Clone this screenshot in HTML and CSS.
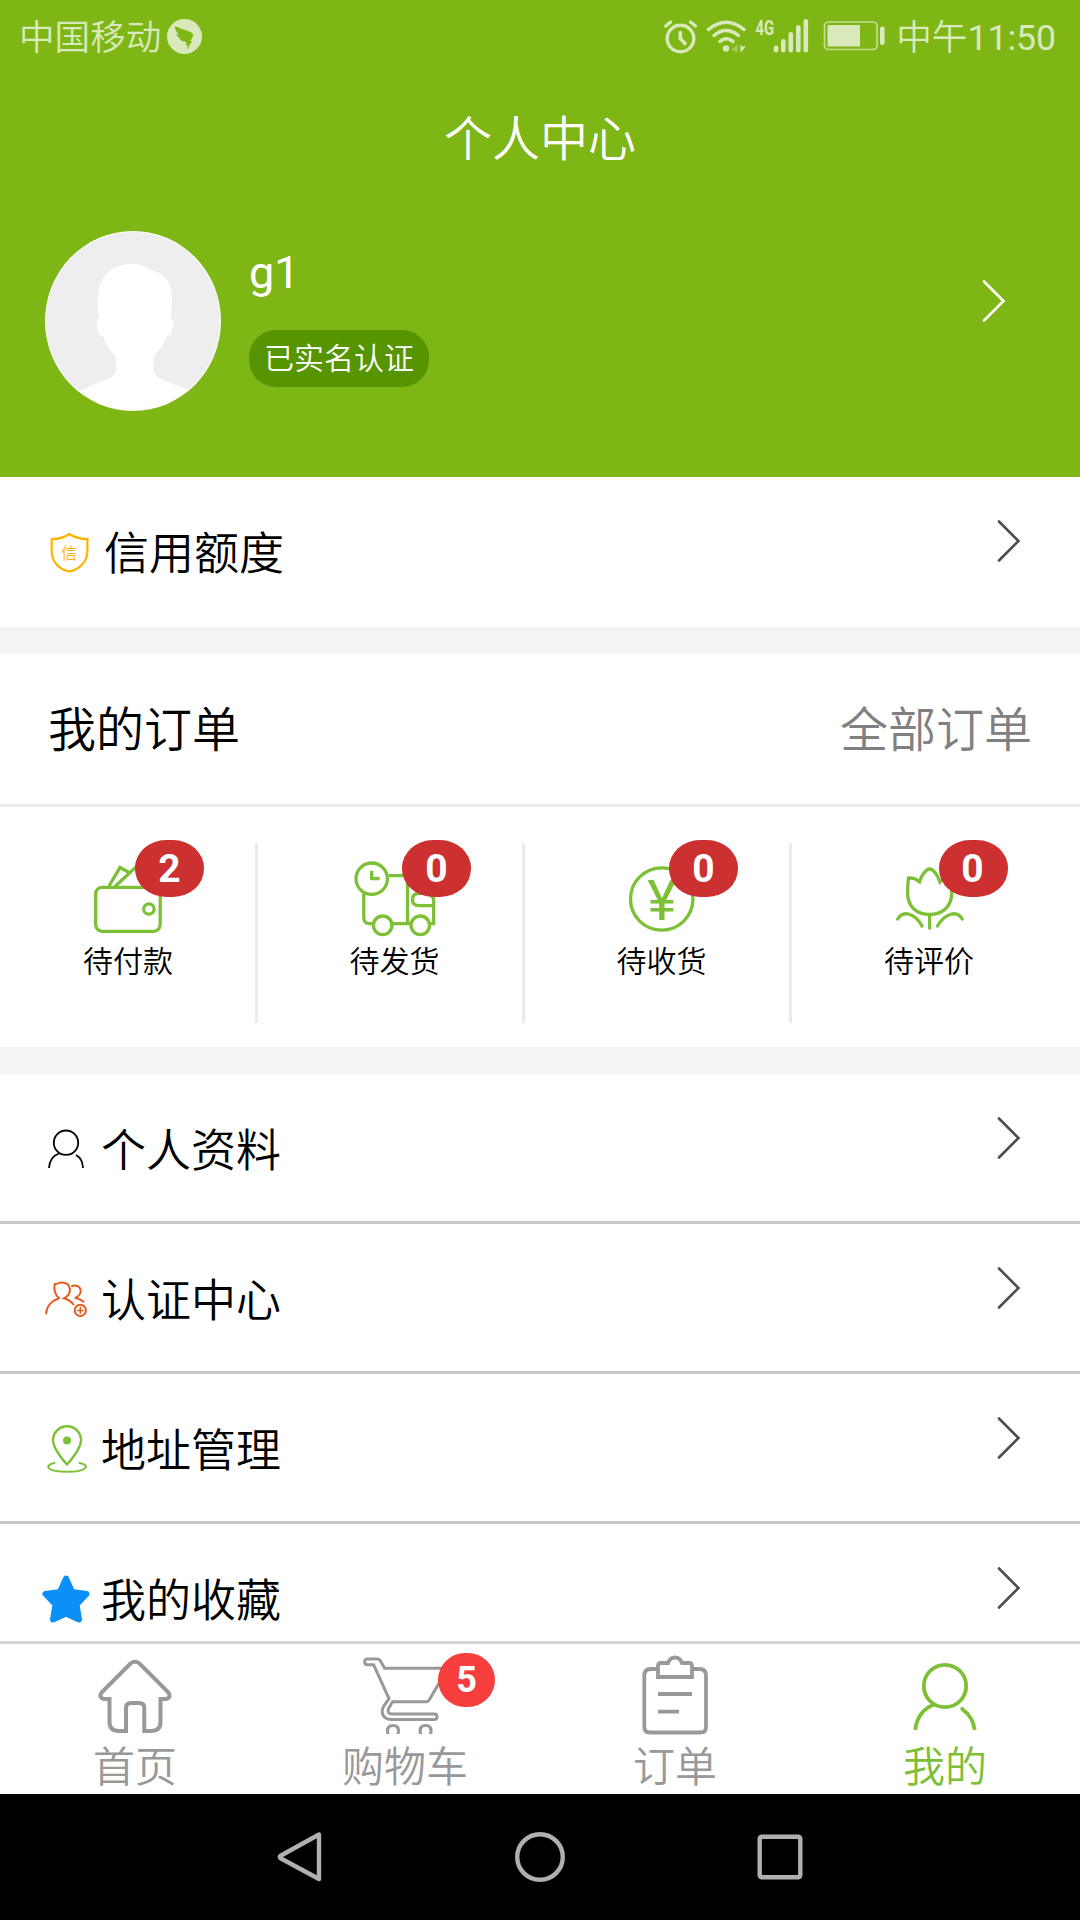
FILE: index.html
```
<!DOCTYPE html>
<html lang="zh-CN">
<head>
    <meta charset="UTF-8">
    <meta name="viewport" content="width=device-width, initial-scale=1.0">
    <title>个人中心</title>
    <link rel="stylesheet" href="styles.css">
</head>
<body>
    <div class="page">
        <header class="header">
            <div class="status-bar">
                <div class="carrier">
                    <span>中国移动</span>
                    <svg class="ding" viewBox="0 0 35 35">
                        <circle cx="17.5" cy="17.5" r="17.5" fill="#dae9bb"/>
                        <path d="M8 7 Q15 10.500 23 12.800 Q26.500 14 26 17 Q25 20 23 22 H25 L20 31 L20.500 26 H18.500 L19.500 23 Q14 22.500 12 19.500 L14.500 19.500 Q10 18 9.500 15 L12.500 15.500 Q7.500 12 8 7Z" fill="#7eb615"/>
                    </svg>
                </div>
                <div class="indicators">
                    <svg width="35" height="36" viewBox="0 0 35 36" fill="none" stroke="#dae9bb" stroke-linecap="round">
                        <circle cx="17.500" cy="20.500" r="13.300" stroke-width="3.400"/>
                        <path d="M17.300 14.500 V20.500 L22 25.500" stroke-width="3.600"/>
                        <path d="M2.800 8 L7.500 4 M27.500 4 L32.500 8" stroke-width="3.400"/>
                    </svg>
                    <svg width="41" height="36" viewBox="0 0 41 36" fill="none" stroke="#dae9bb" stroke-width="3.500" stroke-linecap="round">
                        <path d="M2.500 11.500 Q20 -3 38 11.500"/>
                        <path d="M8 17.500 Q20 7.500 32.500 17.500"/>
                        <path d="M14 23.500 Q20 18 27 23.500"/>
                        <circle cx="20" cy="30.500" r="3.200" fill="#dae9bb" stroke="none"/>
                        <path d="M31.500 26 V34.500 L25.500 31.500Z" fill="#a5cc5c" stroke="none"/>
                        <path d="M34.500 34.500 V26 L36 28.500 H40Z" fill="#dae9bb" stroke="none"/>
                    </svg>
                    <svg class="signal" width="54" height="36" viewBox="0 0 54 36" fill="#dae9bb">
                        <text x="0.500" y="16.500" class="net" textLength="18.500" lengthAdjust="spacingAndGlyphs">4G</text>
                        <rect x="18.700" y="27.500" width="4.600" height="7" rx="2.300"/>
                        <rect x="26" y="21" width="4.600" height="13.500" rx="2.300"/>
                        <rect x="33.500" y="14" width="4.600" height="20.500" rx="2.300"/>
                        <rect x="41" y="7" width="4.600" height="27.500" rx="2.300"/>
                        <rect x="48.500" y="1" width="4.600" height="33.500" rx="2.300"/>
                    </svg>
                    <svg class="battery" width="62" height="36" viewBox="0 0 62 36" fill="#dae9bb">
                        <rect x="1.500" y="4" width="52.500" height="27.500" rx="4" fill="none" stroke="#c4dd95" stroke-width="1.700"/>
                        <rect x="4.500" y="7" width="32.500" height="21.500" rx="1"/>
                        <rect x="57" y="8.500" width="4.600" height="18.500" rx="2"/>
                    </svg>
                    <span class="time">中午<span class="clock">11:50</span></span>
                </div>
            </div>

            <h1 class="title">个人中心</h1>

            <div class="profile">
                <svg class="avatar" viewBox="0 0 176 180">
                    <clipPath id="face"><ellipse cx="88" cy="90" rx="87" ry="89"/></clipPath>
                    <ellipse cx="88" cy="90" rx="88" ry="90" fill="#fff"/>
                    <g clip-path="url(#face)">
                        <rect width="176" height="180" fill="#eee"/>
                        <path d="M88 33 Q99 33 106 39.500 C122 42 127.500 54 127 72 L125.500 87 Q130 90 127.500 97 Q125.500 105 121 106 Q118 117 108.500 125 V139 Q109 145 116 148 Q132 155 148 160 L140 180 H36 L30 162 Q48 154 60 149 Q71 145 71 139 V125 Q61 117 58.500 106 Q53 104 52 97 Q50.500 90 54.500 87 Q52.500 79 52.500 70 Q53 33 88 33Z" fill="#fff"/>
                    </g>
                </svg>
                <div class="info">
                    <div class="name">g1</div>
                    <div class="verified">已实名认证</div>
                </div>
                <svg class="arrow arrow-light" viewBox="0 0 24 44"><path d="M2 2.500 L21.500 22 L2 41.500"/></svg>
            </div>
        </header>

        <div class="row credit">
            <svg class="row-icon" viewBox="0 0 48 48" fill="none" stroke="#ffb400" stroke-width="2.200">
                <path d="M27.300 6 C22 9.800 16 11 9.700 11.200 V24 C10 34 18 42.500 27.300 43.300 C36.500 42.500 45 34 45.400 24 V11.200 C39 11 32.500 9.800 27.300 6Z"/>
                <text x="19" y="30.500" class="shield-text">信</text>
            </svg>
            <span class="row-label">信用额度</span>
            <svg class="arrow" viewBox="0 0 24 44"><path d="M2 2.500 L21.500 22 L2 41.500"/></svg>
        </div>

        <div class="spacer"></div>

        <div class="orders-head">
            <span>我的订单</span>
            <span class="all">全部订单</span>
        </div>
        <div class="orders">
            <div class="order first">
                <svg class="order-icon" viewBox="0 0 90 90">
                    <rect x="12.700" y="32.300" width="64.500" height="44" rx="6.500"/>
                    <circle cx="65.900" cy="54" r="5.200"/>
                    <path d="M26 31 L37 12.500 L47 18 M32 31.500 L54 11 L72 31"/>
                </svg>
                <span class="badge">2</span>
                <span class="order-label">待付款</span>
            </div>
            <div class="order">
                <svg class="order-icon" viewBox="0 0 90 90">
                    <circle cx="21.700" cy="23.700" r="15.700"/>
                    <path d="M21.700 15.700 V23.700 H29.600"/>
                    <path d="M38.600 20.700 H57.500 V68.700 M13.800 38 V63 Q14 68.700 19.500 68.700 H23.500 M42 68.700 H61"/>
                    <circle cx="32.700" cy="70.300" r="9.300"/>
                    <circle cx="70.300" cy="70.300" r="9.300"/>
                    <path d="M57.500 27 H74 L83.700 44 V68.700 H79.500 M83.700 50.700 H69 Q62.500 50.700 62.500 44.500 Q62.500 38.300 69 38.300 H80 L83.700 44"/>
                </svg>
                <span class="badge">0</span>
                <span class="order-label">待发货</span>
            </div>
            <div class="order">
                <svg class="order-icon" viewBox="0 0 90 90">
                    <circle cx="44.700" cy="44" r="31.200"/>
                    <text x="45" y="65" class="yen">¥</text>
                </svg>
                <span class="badge">0</span>
                <span class="order-label">待收货</span>
            </div>
            <div class="order last">
                <svg class="order-icon" viewBox="0 0 90 90" stroke-linecap="round">
                    <path d="M24.500 23 Q30 22.500 35.500 26.700 C37.500 20 42.500 14 45.600 14 C48.700 14 54 20 56 27 Q61 22.500 66.700 23 Q67.700 29 67.700 38 C67.700 52 58 59.500 45.600 59.500 S23.600 52 23.600 38 Q23.600 29 24.500 23Z"/>
                    <path d="M45.600 60 V73 M13.700 64 C19 55 31 58 38 71 M78.300 64 C73 55 61 58 53.500 71"/>
                </svg>
                <span class="badge">0</span>
                <span class="order-label">待评价</span>
            </div>
        </div>

        <div class="spacer"></div>

        <div class="menu">
            <div class="row">
                <svg class="row-icon" viewBox="0 0 48 48" fill="none" stroke="#000" stroke-width="1.800">
                    <circle cx="24" cy="17.700" r="12.200"/>
                    <path d="M7 43 C7.500 36 11 30.500 17 28.500 M34 30 C38.500 32.500 40.700 37 41 43"/>
                </svg>
                <span class="row-label">个人资料</span>
                <svg class="arrow" viewBox="0 0 24 44"><path d="M2 2.500 L21.500 22 L2 41.500"/></svg>
            </div>
            <div class="row">
                <svg class="row-icon" viewBox="0 0 48 48" fill="none" stroke="#e8591c" stroke-width="2" stroke-linecap="round">
                    <path d="M17 23 C13 20 11.500 14 12.800 9 Q16 9 18 7.500 C31 7 30 19 22 23.300 Q28 25 31.500 29.500"/>
                    <path d="M17 23.300 C9 26 4.500 32 4.200 38.500"/>
                    <path d="M30 11 C39 8 42.500 19 33 23 Q38 23.500 41.500 26.700"/>
                    <circle cx="38.300" cy="35.400" r="5.600"/>
                    <path d="M35.500 35.400 H41.100 M38.300 32.600 V38.200" stroke-width="1.500"/>
                </svg>
                <span class="row-label">认证中心</span>
                <svg class="arrow" viewBox="0 0 24 44"><path d="M2 2.500 L21.500 22 L2 41.500"/></svg>
            </div>
            <div class="row">
                <svg class="row-icon" viewBox="0 0 48 48" fill="none" stroke="#7cc036" stroke-width="2.400" stroke-linecap="round">
                    <path d="M25 39.500 C22.500 37 11 23.500 11 15.200 A14 14 0 0 1 39 15.200 C39 23.500 27.500 37 25 39.500Z"/>
                    <circle cx="25" cy="15.600" r="4" fill="#7cc036" stroke="none"/>
                    <path d="M12.500 38 C2 40 4 46.800 25 46.800 S48.500 40 37.500 38" stroke-width="2"/>
                </svg>
                <span class="row-label">地址管理</span>
                <svg class="arrow" viewBox="0 0 24 44"><path d="M2 2.500 L21.500 22 L2 41.500"/></svg>
            </div>
            <div class="row">
                <svg class="row-icon" viewBox="0 0 48 48" fill="#0a90f8" stroke="#0a90f8" stroke-width="6" stroke-linejoin="round">
                    <path d="M24 3.500 L30 17 L44.500 19 L34.500 29.500 L37 44.500 L24 38.500 L11 44.500 L13.500 29.500 L3.500 19 L18 17Z"/>
                </svg>
                <span class="row-label">我的收藏</span>
                <svg class="arrow" viewBox="0 0 24 44"><path d="M2 2.500 L21.500 22 L2 41.500"/></svg>
            </div>
        </div>

        <nav class="tabs">
            <div class="tab">
                <svg class="tab-icon" viewBox="0 0 90 90">
                    <path d="M36 81 H29 Q19.500 81 19.500 72 V49 H14 Q8 47.500 12 42 L40.500 13.500 Q45 10 49.500 13.500 L78 42 Q82 47.500 76 49 H70.500 V72 Q70.500 81 61 81 H54.300 V58 Q54.300 53 49 53 H41 Q36 53 36 58Z" stroke-width="4"/>
                </svg>
                <span>首页</span>
            </div>
            <div class="tab">
                <svg class="tab-icon" viewBox="0 0 90 90">
                    <path d="M7.500 9 H17 Q19.500 9 20.500 11 L24.600 18.300 H87.700 L69.500 49.500 Q68.500 51.700 66 51.700 H32.600 L28.500 58.500 Q27 64 32 64 H74.600 Q77 64 77 66.800 Q77 69.500 74.600 69.500 H31 Q22.200 69 22.200 61 Q22.200 58 24.500 55 L29 48.700 L13.600 14.700 H7.500 Q4.700 14.700 4.700 11.900 Q4.700 9 7.500 9Z" stroke-width="3"/>
                    <path d="M28 84 Q26 75.500 33 75.500 Q40 75.500 38 84 M60.600 84 Q58.600 75.500 65.600 75.500 Q72.600 75.500 70.600 84" stroke-width="3.200"/>
                </svg>
                <span class="cart-badge">5</span>
                <span>购物车</span>
            </div>
            <div class="tab">
                <svg class="tab-icon" viewBox="0 0 90 90" stroke-width="3.800">
                    <path d="M28 19 H21 Q14.300 19 14.300 25.500 V77 Q14.300 82.500 20 82.500 H70.500 Q76 82.500 76 77 V25.500 Q76 19 69.500 19 H62"/>
                    <path d="M28 27 V16 Q28 13 31 13 H38 Q40 7.500 45 7.500 Q50 7.500 52 13 H59 Q62 13 62 16 V27Z"/>
                    <path d="M28 44 H62 M28 61.700 H49"/>
                </svg>
                <span>订单</span>
            </div>
            <div class="tab active">
                <svg class="tab-icon" viewBox="0 0 90 90" stroke-width="3.800">
                    <circle cx="45" cy="36" r="21.200"/>
                    <path d="M15.300 80 C16.500 67 24 57.500 35 54.500"/>
                    <path d="M62 59 Q73.500 67 74.600 80"/>
                    <circle cx="62.200" cy="58.800" r="1.900" fill="#7cc036" stroke="none"/>
                </svg>
                <span>我的</span>
            </div>
        </nav>

        <div class="nav-bar">
            <svg viewBox="0 0 50 50"><path d="M44 2.500 V47 L6 26.500 Q3.500 25 6 23.500Z" /></svg>
            <svg viewBox="0 0 50 50"><circle cx="25" cy="25" r="22.800"/></svg>
            <svg viewBox="0 0 50 50"><rect x="4.700" y="4.700" width="40.600" height="40.600" rx="2"/></svg>
        </div>
    </div>
</body>
</html>
```

FILE: styles.css
```
* {
    box-sizing: border-box;
}
body {
    margin: 0;
    font-family: Roboto, "Noto Sans CJK SC", sans-serif;
    font-weight: 350;
    color: #000;
    background: #fff;
}
svg {
    display: block;
    flex-shrink: 0;
}
.page {
    width: 1080px;
    height: 1920px;
    display: flex;
    flex-direction: column;
    overflow: hidden;
}

/* header */
.header {
    height: 477px;
    flex-shrink: 0;
    background: #7eb615;
    color: #fff;
}
.status-bar {
    height: 72px;
    padding: 0 24px 0 19px;
    display: flex;
    justify-content: space-between;
    align-items: center;
    font-size: 35.6px;
    line-height: 40px;
    color: #dae9bb;
}
.carrier, .indicators {
    display: flex;
    align-items: center;
}
.carrier {
    gap: 6px;
}
.carrier span, .time {
    padding-top: 3px;
}
.indicators {
    gap: 8px;
}
.ding {
    width: 35px;
    height: 35px;
}
.signal {
    overflow: visible;
}
.net {
    font-size: 20px;
    font-weight: bold;
}
.battery {
    margin-left: 6px;
}
.time {
    margin-left: 3px;
}
.clock {
    font-weight: 400;
}
.title {
    margin: 0;
    height: 132px;
    line-height: 135px;
    text-align: center;
    font-size: 48px;
    font-weight: inherit;
}
.profile {
    display: flex;
    padding: 27px 74px 0 45px;
}
.avatar {
    width: 176px;
    height: 180px;
}
.info {
    flex: 1;
    padding-left: 28px;
}
.name {
    height: 99px;
    line-height: 84px;
    font-size: 45px;
    font-weight: 400;
}
.verified {
    width: 180px;
    height: 57px;
    line-height: 57px;
    border-radius: 27px;
    background: #569400;
    text-align: center;
    font-size: 30px;
}

/* list rows */
.row {
    height: 150px;
    padding: 0 59px 0 42px;
    display: flex;
    align-items: center;
    flex-shrink: 0;
    background: #fff;
}
.menu {
    flex: 1;
    min-height: 0;
    overflow: hidden;
}
.menu .row {
    border-bottom: 3px solid #c8c7cc;
}
.row-icon {
    width: 48px;
    height: 48px;
}
.menu .row-icon {
    margin-top: 3px;
}
.row-label {
    flex: 1;
    padding-left: 11px;
    line-height: 60px;
    padding-top: 9px;
    font-size: 45px;
}
.credit .row-label {
    padding-left: 14px;
    padding-top: 6px;
}
.shield-text {
    font-size: 16px;
    font-weight: 350;
    fill: #ffb400;
    stroke: none;
}
.arrow {
    width: 24px;
    height: 44px;
    margin-bottom: 22px;
    fill: none;
    stroke: #4d4d4d;
    stroke-width: 2.6;
    stroke-linecap: round;
}
.menu .arrow {
    margin-bottom: 19px;
}
.arrow-light {
    margin-top: 48px;
    stroke: #fff;
}
.spacer {
    height: 27px;
    flex-shrink: 0;
    background: #f4f4f4;
}

/* orders */
.orders-head {
    height: 153px;
    padding: 0 48px 6px;
    display: flex;
    justify-content: space-between;
    align-items: center;
    flex-shrink: 0;
    border-bottom: 3px solid #ebebeb;
    font-size: 48px;
}
.all {
    color: #808080;
}
.orders {
    height: 240px;
    padding-top: 36px;
    display: flex;
    flex-shrink: 0;
}
.order {
    position: relative;
    width: 267px;
    height: 180px;
    padding: 12px 0 0 9px;
    border-right: 3px solid #ebebeb;
    display: flex;
    flex-direction: column;
    align-items: center;
}
.order.first {
    width: 258px;
    padding-left: 0;
}
.order.last {
    border-right-color: transparent;
}
.order-icon {
    width: 90px;
    height: 90px;
    fill: none;
    stroke: #7cc036;
    stroke-width: 3.3;
}
.yen {
    font-size: 56px;
    font-weight: 400;
    text-anchor: middle;
    fill: #7cc036;
    stroke: none;
}
.order-label {
    line-height: 34px;
    font-size: 30px;
}
.first .order-label, .last .order-label {
    padding-left: 1px;
}
.badge {
    position: absolute;
    top: -3px;
    left: 144px;
    width: 69px;
    height: 57px;
    line-height: 59px;
    border-radius: 31px / 28px;
    background: #cc3030;
    color: #fff;
    text-align: center;
    font-size: 39px;
    font-weight: bold;
}
.first .badge {
    left: 135px;
}
.last .badge {
    left: 147px;
    padding-right: 2px;
}

/* bottom tabs */
.tabs {
    height: 153px;
    display: flex;
    flex-shrink: 0;
    border-top: 3px solid #d3d3d3;
    background: #fff;
}
.tab {
    position: relative;
    flex: 1;
    padding-top: 6px;
    display: flex;
    flex-direction: column;
    align-items: center;
    color: #999;
    font-size: 42px;
    line-height: 56px;
}
.tab.active {
    color: #7cc036;
}
.tab-icon {
    width: 90px;
    height: 90px;
    fill: none;
    stroke: currentColor;
}
.cart-badge {
    position: absolute;
    top: 9px;
    left: 168px;
    width: 57px;
    height: 54px;
    line-height: 54px;
    border-radius: 27px;
    background: #f63e3e;
    color: #fff;
    text-align: center;
    font-size: 36px;
    font-weight: bold;
}

/* android navigation */
.nav-bar {
    height: 126px;
    display: flex;
    justify-content: center;
    align-items: center;
    gap: 190px;
    flex-shrink: 0;
    background: #000;
}
.nav-bar svg {
    width: 50px;
    height: 50px;
    fill: none;
    stroke: #b0b0b0;
    stroke-width: 4.4;
    stroke-linejoin: round;
}
```
